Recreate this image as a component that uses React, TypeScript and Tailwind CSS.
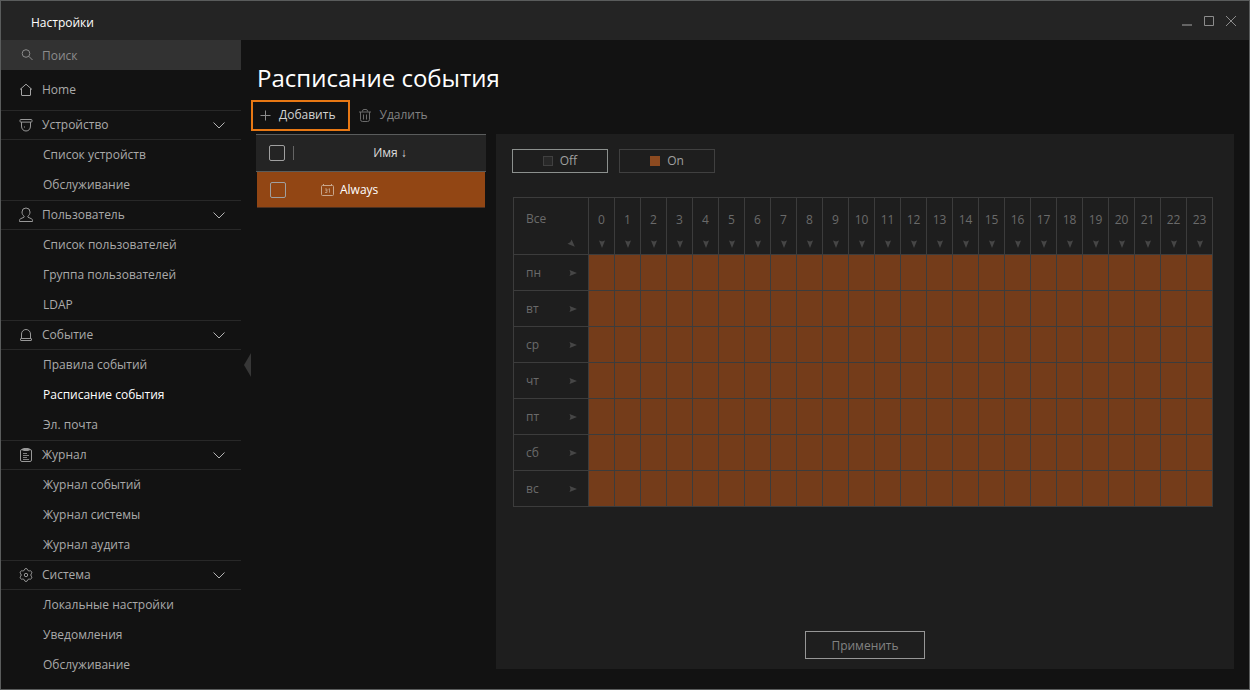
import React from "react";

type IconProps = { children: React.ReactNode; className?: string; size?: number };

function Icon({ children, className = "", size = 16 }: IconProps) {
  return (
    <svg
      width={size}
      height={size}
      viewBox={`0 0 ${size} ${size}`}
      fill="none"
      stroke="currentColor"
      strokeWidth="1"
      strokeLinejoin="round"
      className={`shrink-0 ${className}`}
      aria-hidden="true"
    >
      {children}
    </svg>
  );
}

const DeviceIcon = () => (
  <Icon className="text-[#989898]">
    <rect x="2" y="2.5" width="12" height="2.6" rx="0.8" />
    <path d="M3.500 5.100V9C3.500 12 5.300 14 8 14S12.500 12 12.500 9V5.100" />
    <rect x="6" y="9.500" width="1" height="1" fill="currentColor" stroke="none" />
  </Icon>
);

const UserIcon = () => (
  <Icon className="text-[#989898]">
    <path d="M6.200 9.200C4.800 8.300 4 6.800 4 5a4 4 0 0 1 8 0c0 1.800-.8 3.300-2.200 4.200l.2 1 3.500 1.600c.7.300 1 .8 1 1.500v1.200H1.500v-1.200c0-.7.300-1.200 1-1.500L6 10.200z" />
  </Icon>
);

const BellIcon = () => (
  <Icon className="text-[#989898]">
    <path d="M3.500 11.500V7a4.500 4.500 0 0 1 9 0v4.500" />
    <rect x="2.500" y="11.500" width="11" height="2" rx="0.500" />
  </Icon>
);

const LogIcon = () => (
  <Icon className="text-[#989898]">
    <rect x="2.500" y="2.500" width="11" height="12" rx="1.500" />
    <rect x="4.500" y="1.500" width="7" height="2" rx="0.800" />
    <path d="M5 6.500h4M5 8.500h6M5 10.500h4M5 12.500h6" stroke="#808080" />
  </Icon>
);

const GearIcon = () => (
  <Icon className="text-[#989898]">
    <path d="M6.300 2.900A1.750 1.750 0 0 1 9.700 2.900Q10.100 4.300 11.500 3.900A1.750 1.750 0 0 1 13.300 6.800Q12.200 8 13.300 9.200A1.750 1.750 0 0 1 11.500 12.100Q10.100 11.700 9.700 13.100A1.750 1.750 0 0 1 6.300 13.100Q5.900 11.700 4.500 12.100A1.750 1.750 0 0 1 2.700 9.200Q3.800 8 2.700 6.800A1.750 1.750 0 0 1 4.500 3.900Q5.900 4.300 6.300 2.900z" />
    <circle cx="8" cy="8" r="1.700" />
  </Icon>
);

const HomeIcon = () => (
  <Icon className="text-[#a4a4a4]">
    <path d="M2 7.500 8 2.200l6 5.300M3.500 6.500V13q0 .5.5.5h8q.5 0 .5-.5V6.500" />
  </Icon>
);

const SearchIcon = () => (
  <Icon className="text-[#8c8c8c]">
    <circle cx="8" cy="5.500" r="3.800" />
    <path d="m10.800 8.300 3.700 3.700" />
  </Icon>
);

const Chevron = () => (
  <Icon size={14} className="text-[#b4b4b4]">
    <path d="m1.500 4.500 5.500 5.500 5.500-5.500" />
  </Icon>
);

type Section = { title: string; icon: React.ReactNode; items: string[] };

const sections: Section[] = [
  { title: "Устройство", icon: <DeviceIcon />, items: ["Список устройств", "Обслуживание"] },
  {
    title: "Пользователь",
    icon: <UserIcon />,
    items: ["Список пользователей", "Группа пользователей", "LDAP"],
  },
  {
    title: "Событие",
    icon: <BellIcon />,
    items: ["Правила событий", "Расписание события", "Эл. почта"],
  },
  {
    title: "Журнал",
    icon: <LogIcon />,
    items: ["Журнал событий", "Журнал системы", "Журнал аудита"],
  },
  {
    title: "Система",
    icon: <GearIcon />,
    items: ["Локальные настройки", "Уведомления", "Обслуживание"],
  },
];

const days = ["пн", "вт", "ср", "чт", "пт", "сб", "вс"];
const hours = Array.from({ length: 24 }, (_, i) => i);
const activeItem = "Расписание события";

function Arrow({ className = "" }: { className?: string }) {
  return (
    <svg width="8" height="8" viewBox="0 0 8 8" className={`text-[#464646] ${className}`} aria-hidden="true">
      <path d="M0.500 1 8 4 0.500 7 1.500 4z" fill="currentColor" />
    </svg>
  );
}

function TitleBar() {
  return (
    <header className="flex h-[39px] items-center justify-between bg-[#242424] pt-px pr-[11px] pl-[30px]">
      <span className="pt-1 text-white">Настройки</span>
      <div className="flex gap-2 text-[#8c8c8c]">
        <button type="button" aria-label="Свернуть">
          <Icon size={14}>
            <path d="M2 11h10" strokeWidth="2" stroke="#646464" />
          </Icon>
        </button>
        <button type="button" aria-label="Развернуть">
          <Icon size={14}>
            <path d="M2.500 2.500h9v9h-9z" />
          </Icon>
        </button>
        <button type="button" aria-label="Закрыть">
          <Icon size={14}>
            <path d="m2 2 10 10M12 2 2 12" />
          </Icon>
        </button>
      </div>
    </header>
  );
}

function Sidebar() {
  return (
    <aside className="w-60 shrink-0 text-[#aaaaaa]">
      <label className="flex h-[30px] items-center gap-2 bg-[#323232] pt-0.5 pl-[17px]">
        <SearchIcon />
        <input
          type="search"
          aria-label="Поиск"
          placeholder="Поиск"
          className="min-w-0 flex-1 bg-transparent outline-none placeholder:text-[#8c8c8c]"
        />
      </label>
      <nav>
        <a href="#home" className="flex h-10 items-center gap-2 pl-[17px]">
          <HomeIcon />
          Home
        </a>
        {sections.map((section) => (
          <section key={section.title}>
            <button
              type="button"
              aria-expanded="true"
              className="flex h-[30px] w-full items-center gap-2 border-y border-[#282828] pr-[15px] pl-[17px] text-left"
            >
              {section.icon}
              <span className="flex-1">{section.title}</span>
              <Chevron />
            </button>
            <ul>
              {section.items.map((item) => (
                <li key={item}>
                  <a
                    href="#section"
                    className={`flex h-[30px] items-center pl-[42px] ${item === activeItem ? "text-white" : ""}`}
                  >
                    {item}
                  </a>
                </li>
              ))}
            </ul>
          </section>
        ))}
      </nav>
    </aside>
  );
}

function ScheduleList() {
  return (
    <table className="w-[230px] shrink-0 self-start border-separate border-spacing-0">
      <thead>
        <tr className="h-[38px] bg-[#242424] text-[#dcdcdc]">
          <th className="w-12 border-y border-[#5a5c5c] p-0">
            <div className="flex items-center pl-[13px]">
              <input
                type="checkbox"
                aria-label="Выбрать все"
                className="size-4 appearance-none rounded-xs border border-[#a0a0a0]"
              />
              <span className="ml-2 h-[14px] w-px bg-[#646464]" />
            </div>
          </th>
          <th className="border-y border-[#5a5c5c] p-0 pr-[10px] text-center font-normal">Имя ↓</th>
        </tr>
      </thead>
      <tbody>
        <tr className="h-9 text-white">
          <td colSpan={2} className="px-px py-0">
            <label className="flex h-9 items-center border-b border-[#4c3020] bg-[#924614] pl-[13px]">
              <input
                type="checkbox"
                className="size-4 appearance-none rounded-xs border border-[#a0a0a0]"
              />
              <Icon size={14} className="mr-[5px] ml-[35px] text-[#c8a68c]">
                <rect x="0.500" y="2.500" width="12" height="10" rx="1" />
                <path d="M2.500 1v2M10.500 1v2" />
                <path d="M4 6h2v3.500h-2M4.500 7.700h1.500M7.500 6.200 8.500 5.700v4" strokeWidth="0.800" />
              </Icon>
              Always
            </label>
          </td>
        </tr>
      </tbody>
    </table>
  );
}

function ScheduleGrid() {
  return (
    <table className="w-full table-fixed border-separate border-spacing-0 border-t border-l border-[#3c3c3c] text-[#6a6a6a]">
      <thead>
        <tr className="h-[57px]">
          <th className="w-[75px] border-r border-b border-[#3c3c3c] p-0 font-normal">
            <div className="flex h-14 flex-col justify-between pt-[13px] pr-3 pb-1.5 pl-3 text-left">
              Все
              <Arrow className="rotate-45 self-end" />
            </div>
          </th>
          {hours.map((hour) => (
            <th key={hour} className="border-r border-b border-[#3c3c3c] p-0 font-normal">
              <div className="flex h-14 flex-col items-center justify-between pt-[14px] pb-1.5">
                {hour}
                <Arrow className="rotate-90" />
              </div>
            </th>
          ))}
        </tr>
      </thead>
      <tbody>
        {days.map((day) => (
          <tr key={day} className="h-9">
            <th className="border-r border-b border-[#3c3c3c] p-0 font-normal">
              <div className="flex items-center justify-between pr-[11px] pl-3">
                {day}
                <Arrow />
              </div>
            </th>
            {hours.map((hour) => (
              <td key={hour} className="border-r border-b border-[#3c3c3c] bg-[#743c1a] p-0" />
            ))}
          </tr>
        ))}
      </tbody>
    </table>
  );
}

export default function App() {
  return (
    <div className="flex min-h-screen flex-col border border-[#5a5c5c] bg-[#121212] font-['Open_Sans','Noto_Sans',sans-serif] text-[12px] leading-4">
      <TitleBar />
      <div className="flex flex-1">
        <Sidebar />
        <div className="flex w-[10px] shrink-0 items-center justify-end">
          <button type="button" aria-label="Скрыть меню">
            <svg width="7" height="24" viewBox="0 0 7 24" aria-hidden="true">
              <path d="M7 0v24L0 12z" fill="#373737" />
            </svg>
          </button>
        </div>
        <main className="flex min-w-0 flex-1 flex-col pr-[15px] pb-5">
          <h1 className="mt-5 pl-1.5 text-[24px] leading-9 text-white">Расписание события</h1>
          <div className="mt-1 mb-[3px] flex h-[31px]">
            <button
              type="button"
              className="flex items-center gap-[7px] border-2 border-[#e87814] pr-[13px] pb-0.5 pl-[5px] text-[#d2d2d2]"
            >
              <Icon size={14} className="text-[#8c8c8c]">
                <path d="M7.500 2.500v10M2.500 7.500h10" />
              </Icon>
              Добавить
            </button>
            <button type="button" className="flex items-center gap-[7px] pb-0.5 pl-2 text-[#828282]">
              <Icon size={14} className="text-[#6a6a6a]">
                <path d="M1 4h12M4.500 3.500V3q0-1.500 1.500-1.500h2q1.500 0 1.500 1.500v.5M2.500 4v7.500q0 2 2 2h5q2 0 2-2V4M5.500 6.500v5M8.500 6.500v5" />
              </Icon>
              Удалить
            </button>
          </div>
          <div className="flex flex-1 gap-[10px] pl-[5px]">
            <ScheduleList />
            <section className="flex min-w-0 flex-1 flex-col bg-[#1e1e1e] px-4 pt-[15px] pb-[10px]">
              <div className="mb-6 flex gap-[11px] text-[#a0a0a0]">
                <button
                  type="button"
                  className="flex h-6 w-24 items-center justify-center gap-[7px] border border-[#8c908e]"
                >
                  <span className="size-[10px] border border-[#404040] bg-[#282828]" />
                  Off
                </button>
                <button
                  type="button"
                  className="flex h-6 w-24 items-center justify-center gap-[7px] border border-[#404040]"
                >
                  <span className="size-[10px] bg-[#8c4a20]" />
                  On
                </button>
              </div>
              <div className="pr-[5px] pl-px">
                <ScheduleGrid />
              </div>
              <button
                type="button"
                className="mt-auto h-7 w-[120px] self-center border border-[#969696] pt-0.5 text-[#828282]"
              >
                Применить
              </button>
            </section>
          </div>
        </main>
      </div>
    </div>
  );
}
